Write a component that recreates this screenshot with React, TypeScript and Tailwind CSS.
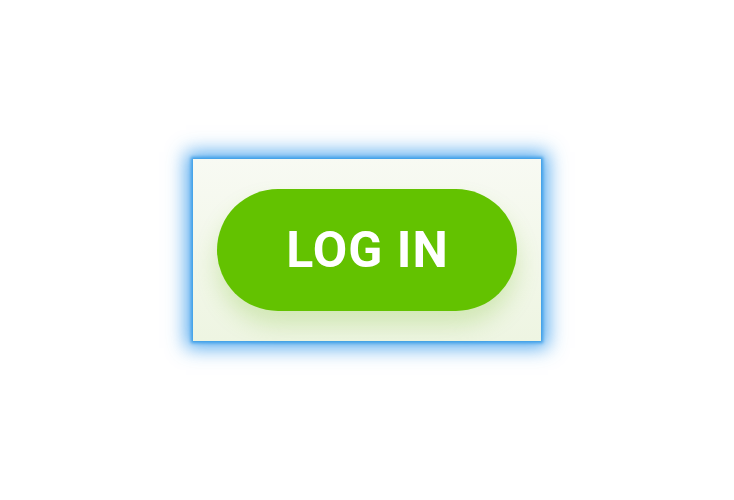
export default function App() {
  return (
    <div className="flex h-[500px] w-[734px] items-center justify-center bg-white">
      <div className="flex h-[182px] w-[348px] items-center justify-center bg-gradient-to-b from-[#f8faf3] to-[#eef5e2] shadow-[0_0_3px_2px_#3d9fe8,0_0_18px_7px_rgba(45,150,235,0.8)]">
        <button className="flex h-[122px] w-[300px] items-center justify-center rounded-full bg-[#63c200] pl-[1px] font-['Roboto',sans-serif] text-[50px] font-bold leading-none tracking-[1px] text-white shadow-[0_14px_22px_rgba(120,190,40,0.25)]">
          LOG IN
        </button>
      </div>
    </div>
  );
}
